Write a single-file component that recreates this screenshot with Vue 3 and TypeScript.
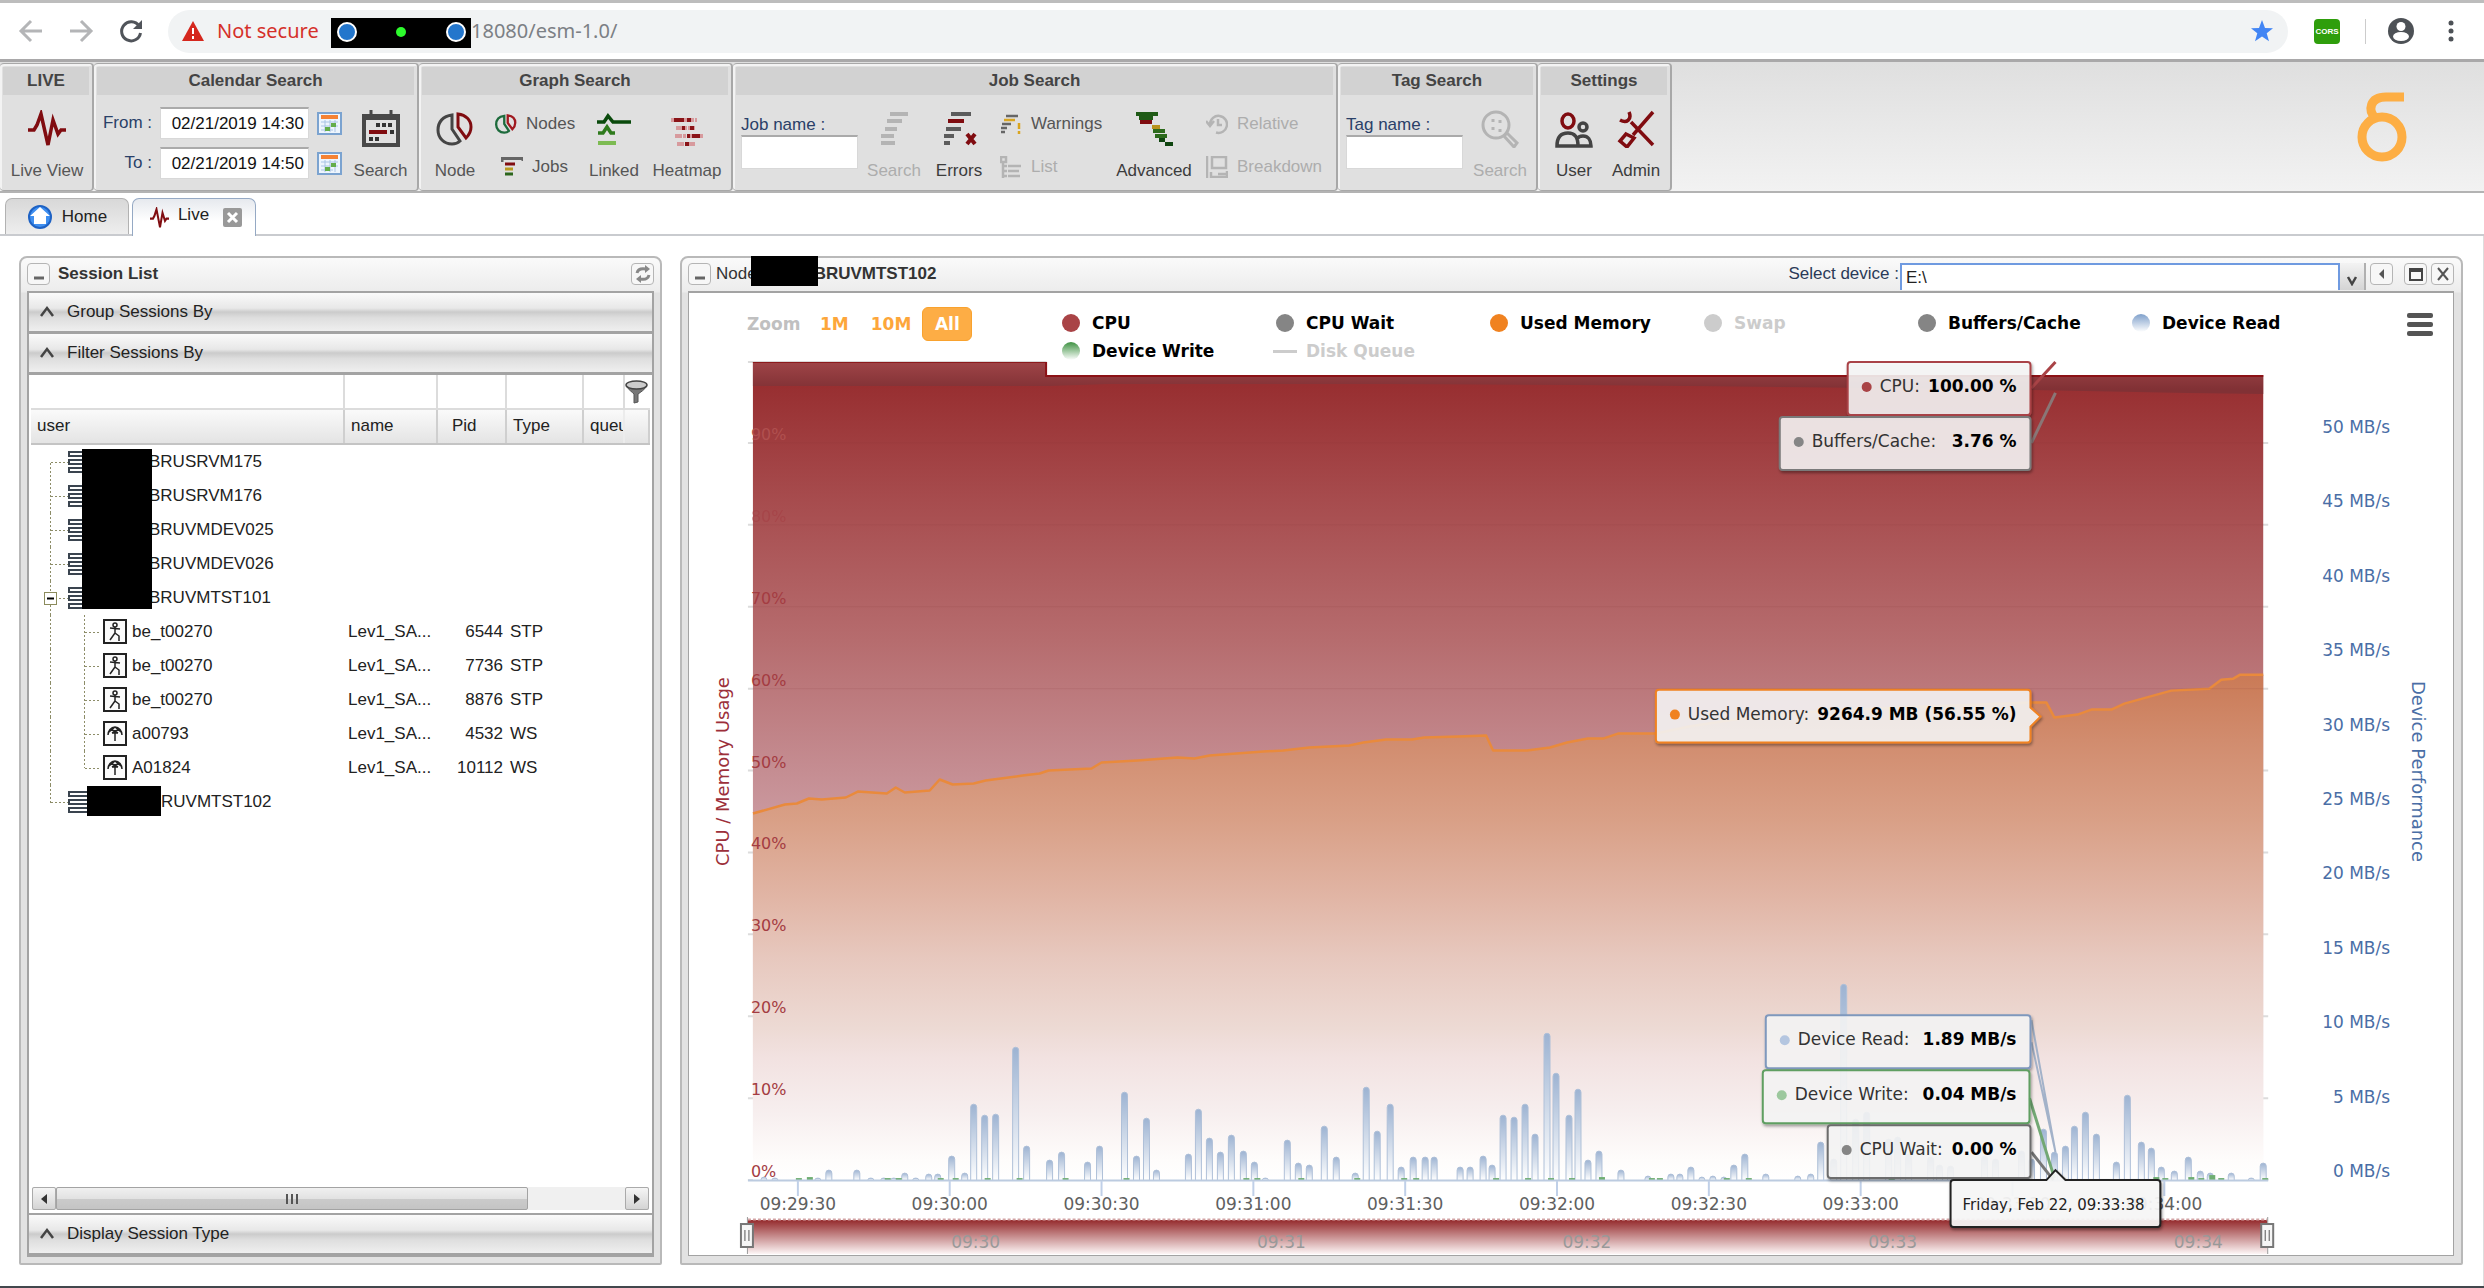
<script setup lang="ts">
import { ref } from 'vue'

interface ServerRow {
  kind: 'server'
  name: string
  open?: boolean
  last?: boolean
}
interface SessionRow {
  kind: 'stp' | 'ws'
  user: string
  job: string
  pid: number
  type: string
  last?: boolean
}
type Row = ServerRow | SessionRow

const from = ref('02/21/2019 14:30')
const to = ref('02/21/2019 14:50')
const jobName = ref('')
const tagName = ref('')
const device = ref('E:\\')

const rows: Row[] = [
  { kind: 'server', name: 'BRUSRVM175' },
  { kind: 'server', name: 'BRUSRVM176' },
  { kind: 'server', name: 'BRUVMDEV025' },
  { kind: 'server', name: 'BRUVMDEV026' },
  { kind: 'server', name: 'BRUVMTST101', open: true },
  { kind: 'stp', user: 'be_t00270', job: 'Lev1_SA...', pid: 6544, type: 'STP' },
  { kind: 'stp', user: 'be_t00270', job: 'Lev1_SA...', pid: 7736, type: 'STP' },
  { kind: 'stp', user: 'be_t00270', job: 'Lev1_SA...', pid: 8876, type: 'STP' },
  { kind: 'ws', user: 'a00793', job: 'Lev1_SA...', pid: 4532, type: 'WS' },
  { kind: 'ws', user: 'A01824', job: 'Lev1_SA...', pid: 10112, type: 'WS', last: true },
  { kind: 'server', name: 'RUVMTST102', last: true },
]

const legend = [
  { label: 'CPU', color: '#a94346' },
  { label: 'CPU Wait', color: '#858585' },
  { label: 'Used Memory', color: '#f08220' },
  { label: 'Swap', color: '#cccccc', off: true },
  { label: 'Buffers/Cache', color: '#858585' },
  { label: 'Device Read', color: 'linear-gradient(#7fa0cb, #fff)' },
  { label: 'Device Write', color: 'linear-gradient(#3f9243, #fff)' },
  { label: 'Disk Queue', color: '', off: true },
]

/* Chart geometry, in viewBox units */
const left = 64
const right = 1576
const base = 820

const percents = [0, 10, 20, 30, 40, 50, 60, 70, 80, 90].map((v) => ({ v, y: base - v * 8.2 }))
const rates = [0, 5, 10, 15, 20, 25, 30, 35, 40, 45, 50].map((v) => ({ v, y: 817 - v * 14.9 }))
const times = ['09:29:30', '09:30:00', '09:30:30', '09:31:00', '09:31:30', '09:32:00', '09:32:30', '09:33:00', '09:33:30', '09:34:00']
  .map((t, i) => ({ t, x: 109 + i * 152 }))
const navTimes = ['09:30', '09:31', '09:32', '09:33', '09:34'].map((t, i) => ({ t, x: 287 + i * 306 }))

/* Device read columns: offset from the plot's left edge, height */
const reads: [number, number][] = [
  [11, 3], [22, 2], [65, 2], [76, 10], [104, 10], [118, 2], [131, 2], [141, 2], [152, 7], [163, 2], [176, 6], [185, 6],
  [199, 24], [212, 7], [221, 76], [232, 65], [243, 66], [263, 133], [274, 34], [297, 20], [309, 28], [335, 18], [347, 34],
  [372, 88], [384, 24], [394, 62], [404, 10], [436, 26], [446, 71], [457, 42], [468, 28], [479, 45], [491, 29], [502, 18],
  [513, 2], [535, 40], [546, 17], [557, 15], [572, 54], [584, 23], [603, 7], [614, 93], [625, 49], [638, 76], [649, 13],
  [661, 23], [673, 23], [682, 23], [708, 13], [718, 13], [731, 24], [740, 15], [751, 65], [762, 63], [773, 76], [783, 46],
  [795, 147], [804, 107], [817, 65], [826, 91], [836, 20], [847, 29], [869, 10], [896, 4], [919, 6], [928, 6], [939, 13],
  [950, 3], [961, 4], [972, 3], [982, 15], [993, 26], [1014, 6], [1046, 4], [1059, 6], [1069, 38], [1082, 21], [1092, 196],
  [1104, 61], [1115, 68], [1137, 41], [1146, 43], [1157, 26], [1179, 23], [1188, 15], [1199, 14], [1233, 24], [1244, 21],
  [1270, 29], [1280, 21], [1292, 51], [1303, 28], [1314, 34], [1323, 54], [1334, 68], [1345, 46], [1365, 18], [1376, 85],
  [1390, 38], [1400, 32], [1410, 13], [1423, 9], [1437, 23], [1449, 9], [1459, 7], [1480, 7], [1500, 2], [1512, 17],
]
const writes: [number, number][] = [
  [46, 2], [57, 3], [135, 2], [146, 2], [188, 2], [203, 2], [235, 2], [267, 2], [313, 2], [374, 2], [494, 2], [505, 2],
  [549, 2], [605, 2], [652, 2], [664, 2], [744, 2], [776, 2], [799, 2], [820, 2], [850, 3], [900, 2], [908, 2], [975, 2],
  [997, 2], [1140, 2], [1405, 3], [1414, 2], [1440, 3], [1450, 2], [1461, 5], [1470, 2], [1514, 2],
]
const column = ([x, h]: [number, number]) => {
  const l = left + x - 3
  const r = Math.min(h, 3)
  return `M${l} ${base}V${base - h + r}q0 ${-r} 3 ${-r}t3 ${r}V${base}`
}

const memory: [number, number][] = [
  [64, 453], [96, 444], [108, 443], [120, 438], [133, 439], [157, 437], [169, 431], [198, 433], [207, 427], [216, 432],
  [241, 430], [251, 419], [264, 424], [285, 423], [297, 420], [334, 415], [351, 413], [360, 410], [403, 408], [413, 402],
  [449, 400], [489, 397], [506, 398], [521, 395], [575, 391], [595, 390], [621, 387], [661, 385], [675, 382], [698, 379],
  [724, 379], [736, 377], [770, 376], [798, 375], [805, 390], [839, 390], [862, 387], [879, 382], [900, 378], [915, 378],
  [930, 373], [968, 373], [1001, 366], [1060, 357], [1140, 350], [1240, 346], [1342, 342], [1359, 342], [1367, 357],
  [1390, 354], [1404, 349], [1424, 349], [1437, 343], [1484, 330], [1522, 328], [1534, 319], [1546, 318], [1553, 314], [1576, 314],
]
const memoryLine = 'M' + memory.map((p) => p.join(' ')).join('L')

const tips = [
  { x: 1160, y: 1, w: 183, color: '#a94346', dot: '#a94346', label: 'CPU:', value: '100.00 %' },
  { x: 1092, y: 56, w: 251, color: '#7a7a7a', dot: '#858585', label: 'Buffers/Cache:', value: '3.76 %' },
  { x: 968, y: 329, w: 375, color: '#f08220', dot: '#f08220', label: 'Used Memory:', value: '9264.9 MB (56.55 %)' },
  { x: 1078, y: 655, w: 265, color: '#7f98bd', dot: '#b4c6e0', label: 'Device Read:', value: '1.89 MB/s' },
  { x: 1075, y: 710, w: 267, color: '#5f9f62', dot: '#9cc89e', label: 'Device Write:', value: '0.04 MB/s' },
  { x: 1140, y: 765, w: 203, color: '#6c6c6c', dot: '#858585', label: 'CPU Wait:', value: '0.00 %' },
]
</script>

<template>
  <div class="page">
    <header class="browser">
      <button class="nav dim" aria-label="Back"><svg width="26" height="26" viewBox="0 0 26 26"><path d="M24 13H3M13 3L3 13l10 10" /></svg></button>
      <button class="nav dim" aria-label="Forward"><svg width="26" height="26" viewBox="0 0 26 26"><path d="M2 13h21M13 3l10 10-10 10" /></svg></button>
      <button class="nav" aria-label="Reload"><svg width="26" height="26" viewBox="0 0 26 26"><path d="M21 8a9.500 9.500 0 1 0 1.500 7" /><path d="M24 2v9h-9z" class="solid" /></svg></button>
      <div class="address">
        <svg width="24" height="22" viewBox="0 0 24 22"><path d="M12 1L23 21H1z" fill="#d5271d" /><path d="M12 8v6M12 16v3" stroke="#fff" stroke-width="2" /></svg>
        <span class="insecure">Not secure</span>
        <svg class="redacted" width="140" height="30" viewBox="0 0 140 30">
          <rect width="140" height="30" fill="#000" />
          <g fill="#2376cc" stroke="#fff" stroke-width="2"><circle cx="16" cy="14" r="9" /><circle cx="125" cy="14" r="9" /></g>
          <circle cx="70" cy="14" r="5" fill="#2dfb2d" />
        </svg>
        <span class="url">18080/esm-1.0/</span>
        <svg class="star" width="24" height="24" viewBox="0 0 24 24"><path d="M12 1l3 8 8 .3-6.300 5 2.300 8L12 17.500 5 22.300l2.300-8L1 9.300 9 9z" fill="#4285f4" /></svg>
      </div>
      <span class="cors">CORS</span>
      <span class="rule"></span>
      <svg width="28" height="28" viewBox="0 0 28 28"><circle cx="14" cy="14" r="13" fill="#4d5156" /><circle cx="14" cy="9.500" r="4.500" fill="#fff" /><ellipse cx="14" cy="19.500" rx="8" ry="4.500" fill="#fff" /></svg>
      <svg class="dots" width="6" height="22" viewBox="0 0 6 22" fill="#4d5156"><circle cx="3" cy="3" r="2.500" /><circle cx="3" cy="11" r="2.500" /><circle cx="3" cy="19" r="2.500" /></svg>
    </header>

    <div class="ribbon">
      <section class="group g-live">
        <h2>LIVE</h2>
        <div class="tools">
          <button class="big"><svg width="38" height="38" viewBox="0 0 38 38"><path d="M0 20h6l3-5 4-11 7 31 5-25 5 14 3-4h5" fill="none" stroke="#800c10" stroke-width="3.500" /></svg>Live View</button>
        </div>
      </section>
      <section class="group g-calendar">
        <h2>Calendar Search</h2>
        <div class="tools">
          <div class="dates">
            <label for="from">From :</label><input id="from" v-model="from" />
            <button class="pick" aria-label="Pick start"><svg width="25" height="23" viewBox="0 0 25 23"><rect x="1" y="1" width="23" height="21" fill="#eef5fd" stroke="#7ba3d0" stroke-width="2" /><path d="M4 5h17" stroke="#f58234" stroke-width="4" /><path d="M4 10h17M4 14h17M4 18h12M8 8v12M13 8v12M18 8v12" stroke="#a9c4e4" /><path d="M14 11h5v4h-5zM8 15h5v4H8z" fill="#65ae4a" /></svg></button>
            <label for="to">To :</label><input id="to" v-model="to" />
            <button class="pick" aria-label="Pick end"><svg width="25" height="23" viewBox="0 0 25 23"><rect x="1" y="1" width="23" height="21" fill="#eef5fd" stroke="#7ba3d0" stroke-width="2" /><path d="M4 5h17" stroke="#f58234" stroke-width="4" /><path d="M4 10h17M4 14h17M4 18h12M8 8v12M13 8v12M18 8v12" stroke="#a9c4e4" /><path d="M14 11h5v4h-5zM8 15h5v4H8z" fill="#65ae4a" /></svg></button>
          </div>
          <button class="big w66"><svg width="38" height="38" viewBox="0 0 38 38"><g fill="none" stroke="#484848" stroke-width="4"><path d="M2 6h34v29H2z" /><path d="M9 0v6M29 0v6" stroke-width="3" /></g><path d="M2 8h34" stroke="#484848" stroke-width="4" /><path d="M14 15h4m2 0h4m2 0h4M7 29h4m2 0h4M28 22h4" stroke="#333" stroke-width="4" /><path d="M7 22h18" stroke="#800c10" stroke-width="4" /></svg>Search</button>
        </div>
      </section>
      <section class="group g-graph">
        <h2>Graph Search</h2>
        <div class="tools">
          <button class="big w56"><svg width="38" height="38" viewBox="0 0 38 38" fill="none" stroke-width="3"><path d="M16 5C7 6 2 12 2 20s6 14 14 14c3 0 6-1 8-3L16 19z" stroke="#454545" /><path d="M22 4c8 1 13 6 13 13 0 5-2 8-5 11l-8-11z" stroke="#800c10" /></svg>Node</button>
          <div class="stack w89">
            <button class="small"><svg width="22" height="22" viewBox="0 0 38 38" fill="none" stroke-width="4"><path d="M16 5C7 6 2 12 2 20s6 14 14 14c3 0 6-1 8-3L16 19z" stroke="#1d6b3c" /><path d="M22 4c8 1 13 6 13 13 0 5-2 8-5 11l-8-11z" stroke="#a01a20" /></svg>Nodes</button>
            <button class="small inset"><svg width="22" height="20" viewBox="0 0 22 20" stroke-width="3"><path d="M1 5V1.500h21V4" stroke="#666" fill="none" /><path d="M4 7h10" stroke="#800c10" /><path d="M4 12h8" stroke="#b89a20" /><path d="M4 17h8" stroke="#2c661c" /></svg>Jobs</button>
          </div>
          <button class="big w52"><svg width="38" height="38" viewBox="0 0 38 38" fill="none" stroke-width="3.500"><path d="M2 12h7l4-6 5 6h18" stroke="#0a4a0c" /><path d="M3 23h5l4-6 4 6h4" stroke="#2e7a1c" /><path d="M3 33h18" stroke="#7dbb52" stroke-width="4" /></svg>Linked</button>
          <button class="big w78"><svg width="38" height="38" viewBox="0 0 38 38" stroke-width="4"><g stroke="#d79a9d"><path d="M3 10h26M8 18h20M7 26h28M9 34h18" stroke-dasharray="7 1 3 1" /></g><g stroke="#8a1418"><path d="M6 10h10M19 10h4M14 18h3M22 18h4M19 26h3M24 26h8M17 34h4" /></g></svg>Heatmap</button>
        </div>
      </section>
      <section class="group g-job">
        <h2>Job Search</h2>
        <div class="tools">
          <div class="field"><label for="job">Job name :</label><input id="job" v-model="jobName" /></div>
          <button class="big w56" disabled><svg width="38" height="38" viewBox="0 0 38 38" stroke="#b4b4b4" stroke-width="4"><path d="M15 4h18M12 11h15M10 19h12M6 26h13M6 33h14" /></svg>Search</button>
          <button class="big w58 dark"><svg width="38" height="38" viewBox="0 0 38 38" stroke="#5c5c5c" stroke-width="4"><path d="M11 4h20M6 19h15M4 26h10M4 33h6" /><path d="M8 11h16" stroke="#800c10" /><path d="M27 24l8 10M35 24l-8 10" stroke="#800c10" /></svg>Errors</button>
          <div class="stack w110">
            <button class="small"><svg width="22" height="22" viewBox="0 0 22 22" stroke="#666" stroke-width="2.500"><path d="M6 3h12M2 11h9M1 15h6M1 19h4" /><path d="M4 7h11M19 10v6m0 2v3" stroke="#d9a520" /></svg>Warnings</button>
            <button class="small" disabled><svg width="22" height="22" viewBox="0 0 22 22" fill="none" stroke="#b4b4b4" stroke-width="2.500"><path d="M1 1h5v5H1zM3 6v16M3 10h4M8 10h13M3 15h4M8 15h11M3 20h4M8 20h12" /></svg>List</button>
          </div>
          <button class="big w80 dark"><svg width="38" height="38" viewBox="0 0 38 38" stroke-width="4"><path d="M1 4h22M4 8h14" stroke="#1f5a16" /><path d="M5 12h12" stroke="#800c10" /><path d="M17 17h8" stroke="#b8921d" /><path d="M18 21h12M20 26h12" stroke="#2c6a1c" /><path d="M24 30h6M30 34h8" stroke="#0f4510" /></svg>Advanced</button>
          <div class="stack w126">
            <button class="small" disabled><svg width="22" height="22" viewBox="0 0 22 22" fill="none" stroke="#b4b4b4" stroke-width="2.500"><path d="M4 11a8.500 8.500 0 1 1 6 8.500M0 8l4 5 4-5M12 6v6h4" /></svg>Relative</button>
            <button class="small" disabled><svg width="22" height="22" viewBox="0 0 22 22" fill="none" stroke="#b4b4b4" stroke-width="2.500"><path d="M1 0v22M6 1h14v11H6zM5 16v5h16v-6M12 18h8" /></svg>Breakdown</button>
          </div>
        </div>
      </section>
      <section class="group g-tag">
        <h2>Tag Search</h2>
        <div class="tools">
          <div class="field"><label for="tag">Tag name :</label><input id="tag" v-model="tagName" /></div>
          <button class="big w58" disabled><svg width="38" height="38" viewBox="0 0 38 38" fill="none" stroke="#b4b4b4"><circle cx="15" cy="15" r="13" stroke-width="3" /><path d="M23 26l3-3 10 10-3 4z" stroke-width="3" /><path d="M12 9v3M19 10v3M12 17v3M19 19v3" stroke-width="3" /></svg>Search</button>
        </div>
      </section>
      <section class="group g-settings">
        <h2>Settings</h2>
        <div class="tools">
          <button class="big w56 dark"><svg width="38" height="38" viewBox="0 0 38 38" fill="none" stroke-width="3.500"><ellipse cx="13" cy="11" rx="6" ry="7" stroke="#800c10" /><circle cx="28" cy="17" r="4" stroke="#444" /><path d="M2 36c0-9 4-13 11-13s10 4 10 13zM23 36h13c0-6-3-10-8-10-3 0-5 1-6 3" stroke="#444" /></svg>User</button>
          <button class="big w52 dark"><svg width="38" height="38" viewBox="0 0 38 38" fill="none" stroke="#800c10" stroke-width="3.500"><path d="M36 2L16 25M14 12l22 23M12 2c3 7-2 12-9 8M9 24l8 4-7 9-7-6z" /></svg>Admin</button>
        </div>
      </section>
      <svg class="logo" width="54" height="74" viewBox="0 0 54 74" fill="none" stroke="#fdae44" stroke-width="9"><ellipse cx="26" cy="47" rx="20" ry="20" /><path d="M48 7H30C14 7 11 20 20 29" /></svg>
    </div>

    <nav class="tabs">
      <a class="tab" href="#home"><svg width="26" height="26" viewBox="0 0 26 26"><circle cx="13" cy="13" r="11" fill="#3f8ff0" stroke="#1e62c4" stroke-width="2" /><path d="M13 3l10 9h-4v8H7v-8H3z" fill="#fff" /></svg>Home</a>
      <a class="tab on" href="#live"><svg width="19" height="22" viewBox="0 0 38 38" preserveAspectRatio="none"><path d="M0 20h6l3-5 4-11 7 31 5-25 5 14 3-4h5" fill="none" stroke="#800c10" stroke-width="4" /></svg><span>Live</span><svg class="shut" width="19" height="19" viewBox="0 0 19 19"><rect width="19" height="19" rx="2" fill="#999" /><path d="M5 5l9 9M14 5l-9 9" stroke="#fff" stroke-width="3" /></svg></a>
    </nav>

    <main class="work">
      <section class="panel sessions">
        <header class="bar">
          <button class="knob" aria-label="Collapse"><svg width="20" height="20" viewBox="0 0 20 20"><path d="M5 14h10" stroke="#666" stroke-width="3" /></svg></button>
          <h3>Session List</h3>
          <button class="knob end" aria-label="Refresh"><svg width="20" height="20" viewBox="0 0 20 20" fill="none" stroke="#888" stroke-width="3"><path d="M4 9c1-4 4-5 9-4M16 11c-1 4-4 5-9 4" /><path d="M12 1l5 4-5 4zM8 11l-5 4 5 4z" fill="#888" stroke="none" /></svg></button>
        </header>
        <div class="box">
          <button v-for="t in ['Group Sessions By', 'Filter Sessions By']" :key="t" class="fold">
            <svg width="16" height="14" viewBox="0 0 16 14"><path d="M2 11l6-8 6 8" fill="none" stroke="#444" stroke-width="2.500" /></svg>{{ t }}
          </button>
          <div class="tree">
            <table>
              <colgroup><col /><col class="c-name" /><col class="c-pid" /><col class="c-type" /><col class="c-queue" /><col class="c-end" /></colgroup>
              <thead>
                <tr class="filters">
                  <td v-for="f in ['user', 'name', 'pid', 'type', 'queue']" :key="f"><input :aria-label="'Filter ' + f" /></td>
                  <td class="funnel"><svg width="23" height="24" viewBox="0 0 23 24"><path d="M1 6c3 4 6 6 8 8v9l4-1v-8c3-2 6-4 9-8z" fill="#777" stroke="#555" /><ellipse cx="11.500" cy="5" rx="10.500" ry="4" fill="#ccc" stroke="#444" stroke-width="1.500" /></svg></td>
                </tr>
                <tr class="heads"><th>user</th><th>name</th><th class="p">Pid</th><th>Type</th><th>queue</th><th></th></tr>
              </thead>
              <tbody>
                <tr v-for="(r, i) in rows" :key="i">
                  <template v-if="r.kind === 'server'">
                    <td colspan="6">
                      <div class="node">
                        <svg :width="r.last ? 130 : 118" height="34">
                          <path :d="(i === 0 ? 'M19.500 18' : 'M19.500 0') + (r.last ? 'V18' : 'V34') + 'M20 17.500H37'" class="dotted" />
                          <g fill="#fff" stroke="#3a444f" stroke-width="2"><path d="M38 7h22v4H38zM38 15h22v4H38zM38 23h22v4H38z" /></g>
                          <template v-if="r.open"><rect x="13.500" y="11.500" width="12" height="12" fill="#fff" stroke="#8b8b5c" /><path d="M16 17.500h7" stroke="#000" stroke-width="2" /></template>
                        </svg>{{ r.name }}
                      </div>
                    </td>
                  </template>
                  <template v-else>
                    <td>
                      <div class="node">
                        <svg width="101" height="34">
                          <path :d="'M19.500 0V34M53.500 0V' + (r.last ? 17 : 34) + 'M54 17.500H70'" class="dotted" />
                          <rect x="73" y="5" width="22" height="23" fill="#fafafa" stroke="#222" stroke-width="2" />
                          <g v-if="r.kind === 'stp'" fill="none" stroke="#222" stroke-width="1.500"><circle cx="84" cy="10" r="2" /><path d="M79 13l10 1M84 12v6l-5 7M84 18l4 3v5" /></g>
                          <g v-else fill="none" stroke="#222" stroke-width="1.500"><path d="M77 18c0-4 3-8 7-8s7 4 7 8M78 15l6-5 6 5M80 12l7 4M88 12l-7 4M81 16h6M84 15v9" /></g>
                        </svg>{{ r.user }}
                      </div>
                    </td>
                    <td class="s">{{ r.job }}</td>
                    <td class="n">{{ r.pid }}</td>
                    <td class="s">{{ r.type }}</td>
                    <td></td>
                    <td></td>
                  </template>
                </tr>
              </tbody>
            </table>
            <i class="mask hosts"></i>
            <i class="mask host"></i>
          </div>
          <div class="scroll">
            <button aria-label="Scroll left"><svg width="8" height="12" viewBox="0 0 8 12"><path d="M7 1v10L1 6z" fill="#333" /></svg></button>
            <div class="rail"><div class="thumb"><i></i><i></i><i></i></div></div>
            <button aria-label="Scroll right"><svg width="8" height="12" viewBox="0 0 8 12"><path d="M1 1v10l6-5z" fill="#333" /></svg></button>
          </div>
          <button class="fold foot">
            <svg width="16" height="14" viewBox="0 0 16 14"><path d="M2 11l6-8 6 8" fill="none" stroke="#444" stroke-width="2.500" /></svg>Display Session Type
          </button>
        </div>
      </section>

      <section class="panel monitor">
        <header class="bar">
          <button class="knob" aria-label="Collapse"><svg width="20" height="20" viewBox="0 0 20 20"><path d="M5 14h10" stroke="#666" stroke-width="3" /></svg></button>
          <h3><span>Node</span><i class="cover"></i>BRUVMTST102</h3>
          <label class="end" for="device">Select device :</label>
          <select id="device" v-model="device"><option>E:\</option></select>
          <button class="drop" aria-label="Open list"><svg width="12" height="10" viewBox="0 0 12 10"><path d="M2 1l4 7 4-7" fill="none" stroke="#444" stroke-width="2.500" /></svg></button>
          <button class="knob" aria-label="Back"><svg width="20" height="20" viewBox="0 0 20 20"><path d="M12 5v10l-5-5z" fill="#555" /></svg></button>
          <button class="knob gap" aria-label="Maximise"><svg width="20" height="20" viewBox="0 0 20 20"><path d="M4 5h12v11H4zM4 7h12" fill="none" stroke="#444" stroke-width="2" /></svg></button>
          <button class="knob" aria-label="Close"><svg width="20" height="20" viewBox="0 0 20 20"><path d="M5 4l10 12M15 4L5 16" stroke="#555" stroke-width="2" /></svg></button>
        </header>
        <div class="box chart">
          <div class="top">
            <div class="zoom"><span>Zoom</span><button>1M</button><button>10M</button><button class="on">All</button></div>
            <ul class="legend">
              <li v-for="l in legend" :key="l.label" :class="{ off: l.off }">
                <i v-if="l.color" :style="{ background: l.color }"></i><i v-else class="dash"></i>{{ l.label }}
              </li>
            </ul>
            <button class="menu" aria-label="Chart menu"><i></i><i></i><i></i></button>
          </div>
          <svg class="plot" viewBox="0 0 1766 894" preserveAspectRatio="xMinYMin meet">
            <defs>
              <linearGradient id="cpu" gradientUnits="userSpaceOnUse" x1="0" y1="25" x2="0" y2="820">
                <stop offset="0" stop-color="#982f31" /><stop offset=".145" stop-color="#a74c4e" /><stop offset=".32" stop-color="#b66c6e" /><stop offset=".54" stop-color="#ca989e" /><stop offset="1" stop-color="#fff" />
              </linearGradient>
              <linearGradient id="cache" gradientUnits="userSpaceOnUse" x1="0" y1="0" x2="0" y2="28">
                <stop offset="0" stop-color="#a04548" /><stop offset="1" stop-color="#813135" />
              </linearGradient>
              <linearGradient id="mem" gradientUnits="userSpaceOnUse" x1="0" y1="314" x2="0" y2="820">
                <stop offset="0" stop-color="#ca7a56" /><stop offset=".13" stop-color="#d18c6e" /><stop offset=".29" stop-color="#d9a087" /><stop offset=".44" stop-color="#e1b5a5" /><stop offset=".56" stop-color="#e7c8be" /><stop offset=".7" stop-color="#eddad4" /><stop offset=".76" stop-color="#f2e2e1" /><stop offset=".87" stop-color="#f7efef" /><stop offset=".96" stop-color="#fefcfb" /><stop offset="1" stop-color="#fff" />
              </linearGradient>
              <linearGradient id="read" gradientUnits="objectBoundingBox" x1="0" y1="0" x2="0" y2="1">
                <stop offset="0" stop-color="#9db3d2" /><stop offset="1" stop-color="#fff" />
              </linearGradient>
              <linearGradient id="nav" x1="0" y1="0" x2="0" y2="1">
                <stop offset="0" stop-color="#942a2c" /><stop offset="1" stop-color="#fdf6f6" />
              </linearGradient>
              <filter id="drop" x="-5%" y="-10%" width="112%" height="130%"><feDropShadow dx="1" dy="2" stdDeviation="1.500" flood-opacity=".4" /></filter>
            </defs>

            <path v-for="p in percents" :key="p.v" :d="`M59 ${p.y}H1581`" stroke="#dcdcdc" stroke-width="2" />
            <path d="M59 1h305" stroke="#dcdcdc" stroke-width="2" />
            <rect :x="left" y="1" :width="right - left" :height="base - 1" fill="url(#cpu)" />
            <path d="M64 1H1576V33L1500 32 1290 28 1000 25 890 24 700 23 420 23 360 25 64 25z" fill="url(#cache)" />
            <path :d="memoryLine + `V${base}H${left}z`" fill="url(#mem)" />
            <path :d="memoryLine" fill="none" stroke="#e98a3c" stroke-width="2.500" stroke-linejoin="round" />
            <g stroke="#803030" stroke-opacity=".12"><path v-for="p in percents.slice(6)" :key="p.v" :d="`M64 ${p.y}H1576`" /></g>
            <path d="M64 1.500H357" stroke="#8c1a1c" />
            <path d="M358 0H1766V14H358z" fill="#fff" />
            <path d="M357.500 1V15H1576" fill="none" stroke="#8c1216" stroke-width="2" />

            <g fill="url(#read)" stroke="#afc0d8"><path v-for="(b, i) in reads" :key="i" :d="column(b)" /></g>
            <g fill="#6fae72"><rect v-for="(w, i) in writes" :key="i" :x="left + w[0] - 3" :y="base - w[1]" width="6" :height="w[1]" /></g>
            <path d="M59 820.500H1581" stroke="#bccbe0" stroke-width="2" />

            <g class="percent"><text v-for="p in percents" :key="p.v" x="62" :y="p.y - 3" :class="{ faint: p.v === 80, pale: p.v === 90 }">{{ p.v }}%</text></g>
            <g class="rate"><text v-for="r in rates" :key="r.v" x="1703" :y="r.y">{{ r.v }} MB/s</text></g>
            <text class="axis cpu" transform="translate(40 411) rotate(-90)">CPU / Memory Usage</text>
            <text class="axis dev" transform="translate(1725 411) rotate(90)">Device Performance</text>
            <g v-for="t in times" :key="t.t"><path :d="`M${t.x} 821v15`" stroke="#c0d0e8" stroke-width="2" /><text class="time" :x="t.x" y="850">{{ t.t }}</text></g>

            <rect x="59" y="860" width="1521" height="34" fill="url(#nav)" />
            <path d="M59 859.500H1580" stroke="#d3a4a5" stroke-width="2" stroke-dasharray="3 2" />
            <text v-for="t in navTimes" :key="t.t" class="time past" :x="t.x" y="888">{{ t.t }}</text>
            <g v-for="x in [58, 1580]" :key="x" stroke="#999" fill="#f6f6f6"><path :d="`M${x}.500 857v37`" /><rect :x="x - 6" y="864" width="12" height="23" stroke="#777" stroke-width="2" /><path :d="`M${x - 2} 870v11M${x + 2} 870v11`" stroke="#555" /></g>

            <g fill="none" stroke-width="3">
              <path d="M1344 27l24-26" stroke="#a94346" /><path d="M1344 82l24-50" stroke="#8a7676" />
              <path d="M1344 682l24 110M1344 660l24 132" stroke="#a3b2c9" stroke-width="2" /><path d="M1342 738l25 80" stroke="#72a874" /><path d="M1344 792l22 28" stroke="#777" />
            </g>
            <g v-for="t in tips" :key="t.label">
              <path v-if="t.label === 'Used Memory:'" d="M971 329H1340q3 0 3 3V347l10 9-10 10V379q0 3-3 3H971q-3 0-3-3V332q0-3 3-3z" fill="#f9f9f9" fill-opacity=".85" :stroke="t.color" stroke-width="2" filter="url(#drop)" />
              <rect v-else :x="t.x" :y="t.y" :width="t.w" height="53" rx="3" fill="#f9f9f9" fill-opacity=".85" :stroke="t.color" stroke-width="2" filter="url(#drop)" />
              <circle :cx="t.x + 19" :cy="t.y + 25" r="5" :fill="t.dot" />
              <text class="tip" :x="t.x + 32" :y="t.y + 30">{{ t.label }}</text>
              <text class="tip value" x="1329" :y="t.y + 30">{{ t.value }}</text>
            </g>
            <path d="M1266 820h93l9-10 10 10h92q3 0 3 3v41q0 3-3 3H1266q-3 0-3-3V823q0-3 3-3z" fill="#f9f9f9" fill-opacity=".9" stroke="#222" stroke-width="2" filter="url(#drop)" />
            <text class="stamp" x="1275" y="850">Friday, Feb 22, 09:33:38</text>
          </svg>
        </div>
      </section>
    </main>
  </div>
</template>

<style>
body { margin: 0; background: #fff; }
</style>

<style scoped>
* { box-sizing: border-box; }
.page { min-height: 100vh; display: flex; flex-direction: column; border-top: 3px solid #bdbdbd; border-bottom: 2px solid #43484d; font: 17px/20px "Liberation Sans", Arial, sans-serif; color: #333; }
button { border: 0; padding: 0; background: none; font: inherit; color: inherit; }
svg { display: block; flex: none; }
h2, h3, ul { margin: 0; padding: 0; font-size: 17px; }
input { font: inherit; }

.browser { height: 59px; flex: none; display: flex; align-items: center; padding: 0 30px 0 18px; border-bottom: 3px solid #a9a8a9; font-family: "Noto Sans", sans-serif; font-size: 20px; }
.nav { margin-right: 24px; }
.nav svg { fill: none; stroke: #50545a; stroke-width: 3; }
.nav.dim svg { stroke: #b4b5b7; }
.nav .solid { fill: #50545a; stroke: none; }
.address { flex: 1; height: 43px; border-radius: 22px; background: #f1f3f4; display: flex; align-items: center; padding: 0 14px 0 13px; margin-right: 26px; }
.insecure { color: #d5302a; margin: 0 9px 0 12px; width: 105px; }
.redacted { margin-top: 4px; }
.url { color: #7c8085; }
.star { margin-left: auto; }
.cors { width: 26px; height: 25px; border-radius: 4px; background: #2f9e0c; color: #fff; font: bold 8px/25px "Liberation Sans", sans-serif; text-align: center; }
.rule { width: 1px; height: 25px; background: #ccc; margin: 0 21px 0 25px; }
.dots { margin-left: 33px; }

.ribbon { height: 131px; flex: none; display: flex; padding-top: 1px; background: linear-gradient(#dfdfdf, #f2f2f2); border-bottom: 2px solid #b3b3b3; }
.group { flex: none; border: 1px solid #a8a8a8; border-width: 1px 2px 1px 0; border-radius: 4px; background: #e0e0e0; box-shadow: inset 1px 1px 0 1px #f3f3f3; padding: 3px; display: flex; flex-direction: column; }
.group h2 { height: 28px; line-height: 28px; background: #d2d2d2; color: #444; text-align: center; }
.g-live { width: 94px; } .g-calendar { width: 325px; } .g-graph { width: 314px; } .g-job { width: 605px; } .g-tag { width: 200px; } .g-settings { width: 134px; }
.tools { flex: 1; display: flex; gap: 8px; padding: 15px 2px 0 5px; }
.big { width: 78px; display: flex; flex-direction: column; align-items: center; gap: 13px; align-self: flex-start; color: #565656; white-space: nowrap; }
.big.dark { color: #3c3c3c; }
.w52 { width: 52px; } .w56 { width: 56px; } .w58 { width: 58px; } .w66 { width: 66px; } .w78 { width: 78px; } .w80 { width: 80px; } .w89 { width: 89px; } .w110 { width: 110px; } .w126 { width: 126px; }
button:disabled { color: #adadad; }
.dates { display: grid; grid-template-columns: 50px 154px 25px; column-gap: 8px; row-gap: 8px; align-content: start; align-items: center; margin-top: -3px; width: 239px; }
.dates { column-gap: 8px; grid-template-columns: 50px 149px 25px; }
.dates label { text-align: right; color: #2a4068; }
.dates input { height: 32px; width: 149px; padding: 0 4px 0 0; text-align: right; color: #111; }
.dates input, .field input { border: 1px solid #d8d8d8; border-top: 2px solid #aaa; background: #fff; }
.pick { height: 23px; }
.stack { display: flex; flex-direction: column; gap: 21px; padding: 3px 0 0 4px; }
.small { display: flex; align-items: center; gap: 9px; height: 22px; color: #555; }
.small.inset { padding-left: 6px; }
.field { width: 117px; display: flex; flex-direction: column; padding-top: 5px; color: #2a4068; }
.field input { width: 117px; height: 34px; }
.logo { margin: 27px 74px 0 auto; }

.tabs { height: 43px; flex: none; display: flex; gap: 3px; padding: 5px 0 0 5px; border-bottom: 2px solid #c9cbcf; }
.tab { height: 36px; width: 124px; display: flex; align-items: center; justify-content: center; gap: 9px; border: 1px solid #b2b2b2; border-bottom: 0; border-radius: 7px 7px 0 0; background: linear-gradient(#d8d8d8, #eee); color: #222; text-decoration: none; }
.tab.on { height: 38px; padding-left: 4px; border-color: #95a9c4; background: linear-gradient(#e6e9ee, #fff 60%); }
.tab.on span { padding-bottom: 6px; }
.shut { margin-left: 5px; }

.work { flex: 1; display: flex; gap: 18px; padding: 20px 20px 21px 19px; border-right: 1px solid #ddd; }
.panel { display: flex; flex-direction: column; border: 2px solid #b9b9b9; border-radius: 8px 8px 2px 2px; background: linear-gradient(#fafafa, #ececec 34px, #e2e2e2 35px); padding: 0 7px 7px 6px; }
.sessions { width: 643px; flex: none; padding: 0 6px 6px; }
.monitor { flex: 1; min-width: 0; }
.bar { height: 33px; flex: none; display: flex; align-items: center; padding-bottom: 2px; }
.bar h3 { margin-left: 8px; display: flex; }
.monitor h3 { margin-left: 5px; }
.bar h3 span { font-weight: normal; }
.cover { width: 67px; height: 30px; margin: -8px -4px -4px -6px; background: #000; z-index: 1; }
.end { margin-left: auto; }
.bar label { color: #2a3a58; margin-right: 1px; }
.knob { width: 23px; height: 22px; border: 1px solid #b5b5b5; border-radius: 4px; background: #f7f7f7; display: flex; align-items: center; justify-content: center; margin-right: 4px; }
.sessions .knob { margin-right: 0; }
.monitor .knob:first-child, .monitor .knob:last-child { margin-right: 0; }
.gap { margin-left: 7px; }
.bar select { width: 440px; height: 27px; margin-top: 6px; appearance: none; border: 2px solid #6f9ae0; border-bottom: 0; border-radius: 0; background: #fff; padding: 0 4px; font: inherit; color: #222; }
.drop { width: 26px; height: 27px; margin: 6px 4px 0 0; border-right: 2px solid #b0b0b0; background: linear-gradient(#f3f3f3, #d4d4d4); display: flex; align-items: center; justify-content: center; padding-top: 8px; }

.box { flex: 1; min-height: 0; display: flex; flex-direction: column; border: 2px solid #a3a3a3; background: #fff; }
.sessions .box { border-width: 2px 2px 4px; }
.fold { height: 41px; flex: none; display: flex; align-items: center; gap: 12px; padding-left: 10px; border-bottom: 3px solid #a3a3a3; background: linear-gradient(#fafafa, #e8e8e8 40%, #cbcbcb 50%, #dedede 65%, #efefef); text-align: left; color: #222; }
.fold.foot { height: 40px; border-bottom: 0; border-top: 2px solid #a3a3a3; }
.tree { flex: 1; position: relative; padding: 0 2px; }
table { width: 100%; table-layout: fixed; border-collapse: collapse; }
.c-name { width: 93px; } .c-pid { width: 69px; } .c-type { width: 77px; } .c-queue { width: 41px; } .c-end { width: 25px; }
td, th { padding: 0; text-align: left; font-weight: normal; white-space: nowrap; overflow: hidden; }
.filters td { height: 34px; border-right: 2px solid #dcdcdc; border-bottom: 2px solid #dcdcdc; }
.filters .funnel { border-right: 0; }
.filters input { display: block; width: 100%; height: 32px; border: 0; background: #fff; }
.heads th { height: 35px; padding-left: 6px; padding-bottom: 2px; border-right: 2px solid #cfcfcf; border-bottom: 2px solid #c4c4c4; background: linear-gradient(#fafafa, #e4e4e4); color: #222; }
.heads th:nth-child(5) { border-right-color: #ececec; }
.heads th.p { padding-left: 14px; }
tbody td { height: 34px; color: #222; }
.node { display: flex; align-items: center; height: 34px; }
.dotted { fill: none; stroke: #8d8d68; stroke-dasharray: 2 2; }
.s { padding-left: 4px; }
.n { text-align: right; padding-right: 3px; }
.mask { position: absolute; background: #000; }
.hosts { left: 53px; top: 74px; width: 70px; height: 160px; }
.host { left: 58px; top: 411px; width: 74px; height: 30px; }
.scroll { height: 23px; flex: none; display: flex; margin: 0 3px 3px; background: #f0f0f0; }
.scroll button { width: 24px; border: 1px solid #aaa; border-radius: 2px; background: linear-gradient(#f5f5f5, #d4d4d4); display: flex; align-items: center; justify-content: center; }
.rail { flex: 1; display: flex; }
.thumb { width: 83%; border: 1px solid #a3a3a3; border-radius: 2px; background: linear-gradient(#f0f0f0, #e2e2e2 50%, #cbcbcb 51%, #c4c4c4); display: flex; align-items: center; justify-content: center; gap: 3px; }
.thumb i { width: 2px; height: 10px; background: #555; }

.chart { border-width: 2px 1px 1px; font-family: "DejaVu Sans", sans-serif; overflow: hidden; }
.top { height: 68px; flex: none; display: flex; align-items: flex-start; padding: 14px 20px 0 58px; font-size: 16px; font-weight: bold; }
.zoom { width: 315px; height: 34px; display: flex; align-items: center; color: #c0c0c0; font-size: 17px; }
.zoom button { color: #fda63a; margin-left: 22px; }
.zoom span { width: 54px; }
.zoom button:first-of-type { margin-left: 19px; }
.zoom .on { margin-left: 11px; width: 50px; height: 34px; border-radius: 6px; border: 1px solid #f9a22e; background: #fdad45; color: #fff; }
.legend { flex: 1; display: grid; grid-template-columns: repeat(6, 1fr); grid-auto-rows: 28px; margin: 2px 61px 0 0; list-style: none; color: #000; }
.legend li { display: flex; align-items: center; gap: 12px; white-space: nowrap; }
.legend i { width: 18px; height: 18px; border-radius: 50%; }
.legend .dash { width: 24px; height: 3px; border-radius: 0; background: #ccc; margin: 0 -3px; }
.legend .off { color: #ccc; }
.menu { width: 26px; margin-top: 6px; display: flex; flex-direction: column; gap: 4px; }
.menu i { height: 5px; width: 26px; border-radius: 2px; background: #555; }
.plot { flex: 1; width: 100%; min-height: 0; font-size: 17px; }
.percent { font-size: 16px; fill: #a43c42; }
.percent .faint { opacity: .5; }
.percent .pale { fill: #b0504f; }
.rate { fill: #4a6ea6; text-anchor: end; }
.axis { text-anchor: middle; font-size: 18px; }
.axis.cpu { fill: #9c2f3a; }
.axis.dev { fill: #4a6ea6; }
.time { fill: #606060; text-anchor: middle; }
.time.past { fill: #999; }
.tip { fill: #333; }
.value { font-weight: bold; text-anchor: end; fill: #000; }
.stamp { font-size: 15px; fill: #222; }
</style>
